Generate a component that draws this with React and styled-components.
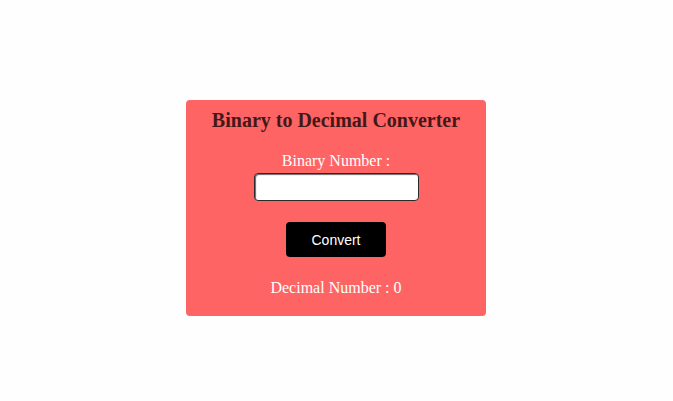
import React, { useState } from 'react'
import styled, { createGlobalStyle } from 'styled-components'

const GlobalStyle = createGlobalStyle`
  html, body {
    margin: 0;
    padding: 0;
    background: #fefefe;
  }
`

export default function App() {
  const [binary, setBinary] = useState('')
  const [decimal, setDecimal] = useState(0)

  const convert = () => {
    const value = parseInt(binary, 2)
    setDecimal(isNaN(value) ? 0 : value)
  }

  return (
    <Page>
      <GlobalStyle />
      <Card>
        <Title>Binary to Decimal Converter</Title>
        <Label htmlFor='binary'>Binary Number :</Label>
        <Input id='binary' value={binary} onChange={e => setBinary(e.target.value)} />
        <ConvertButton onClick={convert}>Convert</ConvertButton>
        <Result>Decimal Number : {decimal}</Result>
      </Card>
    </Page>
  )
}

const Page = styled.div`
  width: 672px;
  height: 401px;
  display: flex;
  justify-content: center;
  align-items: flex-start;
  padding-top: 100px;
  box-sizing: border-box;
  font-family: 'Liberation Serif', 'Times New Roman', serif;
`

const Card = styled.div`
  width: 300px;
  height: 216px;
  box-sizing: border-box;
  background-color: #fe6464;
  border-radius: 4px;
  display: flex;
  flex-direction: column;
  align-items: center;
  padding-top: 8px;
`

const Title = styled.h1`
  margin: 0;
  font-size: 20px;
  font-weight: bold;
  line-height: 24px;
  color: #451818;
`

const Label = styled.label`
  margin-top: 20px;
  font-size: 16px;
  line-height: 18px;
  color: #ffffff;
`

const Input = styled.input`
  margin-top: 3px;
  width: 165px;
  height: 28px;
  box-sizing: border-box;
  border: 1px solid #2a2a2a;
  border-radius: 4px;
  box-shadow: inset 1px 1px 1px #666;
  background: #ffffff;
  padding: 0 6px;
  outline: none;
`

const ConvertButton = styled.button`
  margin-top: 21px;
  width: 100px;
  height: 35px;
  border: none;
  border-radius: 4px;
  background: #000000;
  color: #ffffff;
  font-family: 'Liberation Sans', Arial, sans-serif;
  font-size: 14px;
  cursor: pointer;
`

const Result = styled.p`
  margin: 21px 0 0;
  font-size: 16px;
  line-height: 20px;
  color: #ffffff;
`
